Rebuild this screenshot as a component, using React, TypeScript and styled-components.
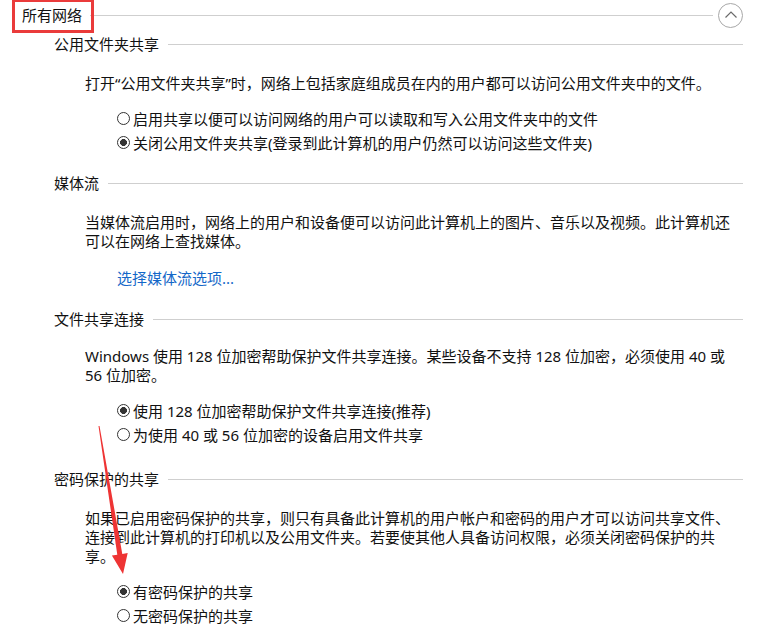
import React from "react";
import styled, { createGlobalStyle } from "styled-components";

const GlobalStyle = createGlobalStyle`
  html, body {
    margin: 0;
    padding: 0;
    background: #ffffff;
  }
  body {
    font-family: "Noto Sans", "Noto Sans CJK SC", sans-serif;
    color: #111111;
  }
`;

type Choice = { label: string; checked?: boolean };

type SectionData = {
  title: string;
  lines: string[];
  choices?: Choice[];
  link?: string;
  // vertical gaps: above the title, above the text, above the options/link
  gaps: [number, number, number];
};

const sections: SectionData[] = [
  {
    title: "公用文件夹共享",
    lines: ["打开“公用文件夹共享”时，网络上包括家庭组成员在内的用户都可以访问公用文件夹中的文件。"],
    choices: [
      { label: "启用共享以便可以访问网络的用户可以读取和写入公用文件夹中的文件" },
      { label: "关闭公用文件夹共享(登录到此计算机的用户仍然可以访问这些文件夹)", checked: true },
    ],
    gaps: [4, 20, 13],
  },
  {
    title: "媒体流",
    lines: [
      "当媒体流启用时，网络上的用户和设备便可以访问此计算机上的图片、音乐以及视频。此计算机还",
      "可以在网络上查找媒体。",
    ],
    link: "选择媒体流选项...",
    gaps: [19, 20, 15],
  },
  {
    title: "文件共享连接",
    lines: [
      "Windows 使用 128 位加密帮助保护文件共享连接。某些设备不支持 128 位加密，必须使用 40 或",
      "56 位加密。",
    ],
    choices: [
      { label: "使用 128 位加密帮助保护文件共享连接(推荐)", checked: true },
      { label: "为使用 40 或 56 位加密的设备启用文件共享" },
    ],
    gaps: [19, 18, 13],
  },
  {
    title: "密码保护的共享",
    lines: [
      "如果已启用密码保护的共享，则只有具备此计算机的用户帐户和密码的用户才可以访问共享文件、",
      "连接到此计算机的打印机以及公用文件夹。若要使其他人具备访问权限，必须关闭密码保护的共",
      "享。",
    ],
    choices: [
      { label: "有密码保护的共享", checked: true },
      { label: "无密码保护的共享" },
    ],
    gaps: [23, 20, 13],
  },
];

function App() {
  return (
    <Page>
      <GlobalStyle />
      <Header>
        <HeaderTitle>所有网络</HeaderTitle>
        <Rule />
        <CollapseButton>
          <svg width="16" height="16" viewBox="0 0 16 16">
            <path d="M2.5 10.5 L8 5 L13.5 10.5" fill="none" stroke="#6a6a6a" strokeWidth="1.2" />
          </svg>
        </CollapseButton>
      </Header>

      {sections.map((s) => (
        <Section key={s.title} gap={s.gaps[0]}>
          <TitleRow>
            <SectionTitle>{s.title}</SectionTitle>
            <Rule />
          </TitleRow>
          <Paragraph gap={s.gaps[1]}>
            {s.lines.map((l) => (
              <Line key={l}>{l}</Line>
            ))}
          </Paragraph>
          {s.choices && (
            <Choices gap={s.gaps[2]}>
              {s.choices.map((c) => (
                <Choice key={c.label}>
                  <RadioDot checked={!!c.checked} />
                  {c.label}
                </Choice>
              ))}
            </Choices>
          )}
          {s.link && <Link gap={s.gaps[2]}>{s.link}</Link>}
        </Section>
      ))}

      <Highlight />
      <Arrow viewBox="0 0 776 624" width="776" height="624">
        <polygon
          points="98.5,426.1 117.3,554.7 111.9,555.6 123,574 127.7,553 122.3,553.9 99.5,425.9"
          fill="#ee3434"
        />
      </Arrow>
    </Page>
  );
}

export default App;

const Page = styled.div`
  position: relative;
  width: 776px;
  height: 624px;
  overflow: hidden;
  font-size: 15px;
`;

const Header = styled.div`
  display: flex;
  align-items: center;
  height: 30px;
  padding: 0 33px 0 22px;
`;

const HeaderTitle = styled.div`
  line-height: 20px;
  margin-right: 8px;
`;

const Rule = styled.div`
  flex: 1;
  height: 1px;
  background: #cfcfcf;
`;

const CollapseButton = styled.div`
  width: 23px;
  height: 23px;
  margin-left: 5px;
  border: 1px solid #a8a8a8;
  border-radius: 50%;
  display: flex;
  align-items: center;
  justify-content: center;
`;

const Section = styled.div<{ gap: number }>`
  margin-top: ${(p) => p.gap}px;
  padding-right: 33px;
`;

const TitleRow = styled.div`
  display: flex;
  align-items: center;
  height: 20px;
  padding-left: 54px;
`;

const SectionTitle = styled.div`
  line-height: 20px;
  margin-right: 9px;
`;

const Paragraph = styled.div<{ gap: number }>`
  margin-top: ${(p) => p.gap}px;
  padding-left: 85px;
`;

const Line = styled.div`
  height: 19px;
  line-height: 19px;
  white-space: nowrap;
`;

const Choices = styled.div<{ gap: number }>`
  margin-top: ${(p) => p.gap}px;
  padding-left: 117px;
`;

const Choice = styled.div`
  display: flex;
  align-items: center;
  height: 24px;
  white-space: nowrap;
`;

const RadioDot = styled.span<{ checked: boolean }>`
  box-sizing: border-box;
  width: 13px;
  height: 13px;
  margin-right: 3px;
  border: 1px solid #333;
  border-radius: 50%;
  background: ${(p) => (p.checked ? "radial-gradient(circle, #333 0 3.2px, #fff 3.7px)" : "#fff")};
`;

const Link = styled.div<{ gap: number }>`
  margin-top: ${(p) => p.gap}px;
  padding-left: 117px;
  line-height: 24px;
  color: #1467c8;
`;

const Highlight = styled.div`
  position: absolute;
  left: 12px;
  top: 0;
  width: 82px;
  height: 33px;
  box-sizing: border-box;
  border: 3px solid #ea3b3b;
  border-top-width: 2px;
`;

const Arrow = styled.svg`
  position: absolute;
  left: 0;
  top: 0;
  pointer-events: none;
`;
